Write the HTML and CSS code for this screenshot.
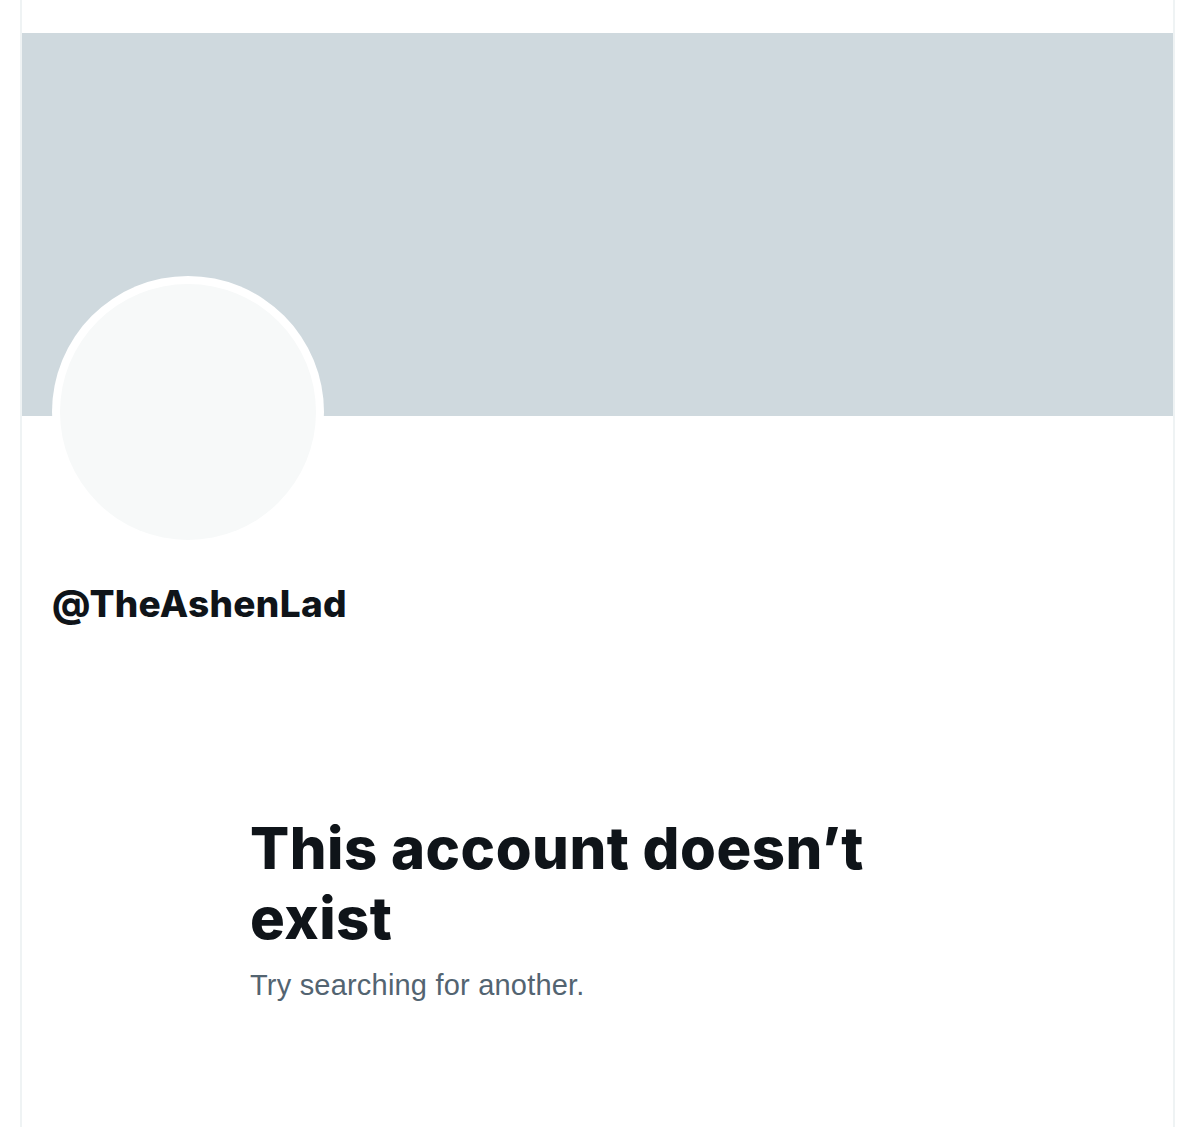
FILE: index.html
```html
<!DOCTYPE html>
<html lang="en">
<head>
<meta charset="utf-8">
<title>Profile</title>
<link rel="stylesheet" href="styles.css">
</head>
<body>
<main class="column">
  <div class="banner"></div>
  <div class="profile-head">
    <div class="avatar"><div class="avatar-inner"></div></div>
    <div class="handle">@TheAshenLad</div>
  </div>
  <section class="empty">
    <h1 class="empty-title">This account doesn’t exist</h1>
    <p class="empty-sub">Try searching for another.</p>
  </section>
</main>
</body>
</html>
```
FILE: styles.css
```css
html, body {
  margin: 0;
  padding: 0;
  background: #ffffff;
}
body {
  font-family: "Liberation Sans", Arial, sans-serif;
  color: #0f1419;
}
.column {
  margin-left: 20px;
  width: 1151px;
  min-height: 1127px;
  border-left: 2px solid #eff3f4;
  border-right: 2px solid #eff3f4;
  padding-top: 33px;
  box-sizing: content-box;
}
.banner {
  height: 383px;
  background: #cfd9de;
}
.profile-head {
  padding-left: 30px;
  margin-top: -140px;
}
.avatar {
  width: 272px;
  height: 272px;
  border-radius: 50%;
  background: #ffffff;
  display: flex;
  align-items: center;
  justify-content: center;
}
.avatar-inner {
  width: 256px;
  height: 256px;
  border-radius: 50%;
  background: #f7f9f9;
}
.handle {
  margin-top: 34px;
  font-family: Inter, "Liberation Sans", sans-serif;
  font-size: 37px;
  font-weight: 800;
  line-height: 44px;
  letter-spacing: 0.3px;
  color: #0f1419;
}
.empty {
  padding-left: 228px;
  margin-top: 187px;
  width: 700px;
}
.empty-title {
  margin: 0;
  font-family: Inter, "Liberation Sans", sans-serif;
  font-size: 58px;
  font-weight: 800;
  line-height: 70px;
  letter-spacing: 0.5px;
  color: #0f1419;
}
.empty-sub {
  margin: 14px 0 0;
  font-size: 29px;
  line-height: 36px;
  letter-spacing: 0.2px;
  color: #536471;
}
```
